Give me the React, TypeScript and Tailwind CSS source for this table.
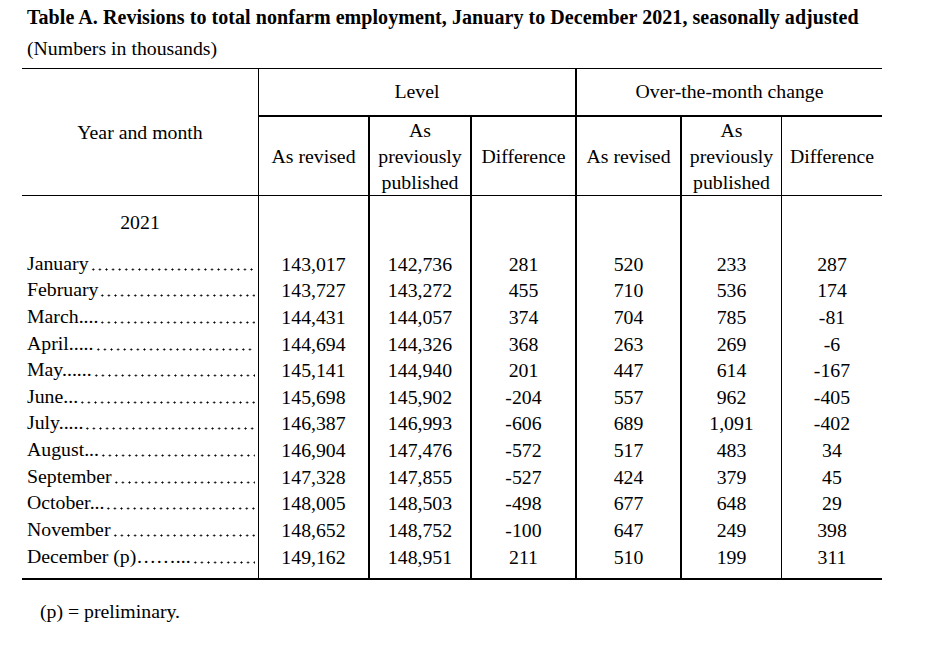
import React from "react";

const cols = "grid grid-cols-[236px_110px_102px_105px_105px_101px_101px]";

type Row = { m: string; pre: string; v: string[] };

const rows: Row[] = [
  { m: "January", pre: "", v: ["143,017", "142,736", "281", "520", "233", "287"] },
  { m: "February", pre: "", v: ["143,727", "143,272", "455", "710", "536", "174"] },
  { m: "March", pre: "....", v: ["144,431", "144,057", "374", "704", "785", "-81"] },
  { m: "April", pre: ".....", v: ["144,694", "144,326", "368", "263", "269", "-6"] },
  { m: "May", pre: "......", v: ["145,141", "144,940", "201", "447", "614", "-167"] },
  { m: "June", pre: "...", v: ["145,698", "145,902", "-204", "557", "962", "-405"] },
  { m: "July", pre: ".....", v: ["146,387", "146,993", "-606", "689", "1,091", "-402"] },
  { m: "August", pre: "...", v: ["146,904", "147,476", "-572", "517", "483", "34"] },
  { m: "September", pre: "", v: ["147,328", "147,855", "-527", "424", "379", "45"] },
  { m: "October", pre: "...", v: ["148,005", "148,503", "-498", "677", "648", "29"] },
  { m: "November", pre: "", v: ["148,652", "148,752", "-100", "647", "249", "398"] },
  { m: "December (p)", pre: "……...", v: ["149,162", "148,951", "211", "510", "199", "311"] },
];

const borders = [
  "border-l border-black",
  "border-l-2 border-black",
  "border-l-2 border-black",
  "border-l-2 border-black",
  "border-l-2 border-black",
  "border-l border-black",
];

function BodyRow({ h, first, values }: { h: string; first?: React.ReactNode; values?: string[] }) {
  return (
    <div className={`${cols} ${h}`}>
      <div className="flex items-stretch min-w-0">{first}</div>
      {borders.map((b, i) => (
        <div key={i} className={`${b} flex items-center justify-center`}>
          {values ? values[i] : null}
        </div>
      ))}
    </div>
  );
}

export default function App() {
  return (
    <div
      className="w-[936px] h-[648px] bg-white text-black text-[19.8px]"
      style={{ fontFamily: '"Liberation Serif", "Times New Roman", serif' }}
    >
      <div className="pt-[4px] pl-[27px] font-bold text-[20px] tracking-[0.06px] leading-[26px] whitespace-nowrap">
        Table A. Revisions to total nonfarm employment, January to December 2021, seasonally adjusted
      </div>
      <div className="mt-[5px] pl-[27px] leading-[26px]">(Numbers in thousands)</div>

      <div className="ml-[22px] mt-[7px] w-[860px]">
        {/* header */}
        <div className="flex border-t border-b border-black">
          <div className="w-[236px] h-[126px] flex items-center justify-center leading-[26px]">
            Year and month
          </div>
          <div className="w-[317px] border-l border-black flex flex-col">
            <div className="h-[48px] border-b-2 border-black flex items-center justify-center">Level</div>
            <div className="flex h-[78px] leading-[26px] text-center">
              <div className="w-[109px] flex items-center justify-center">As revised</div>
              <div className="w-[102px] border-l-2 border-black flex items-center justify-center">
                As
                <br />
                previously
                <br />
                published
              </div>
              <div className="w-[105px] border-l-2 border-black flex items-center justify-center">Difference</div>
            </div>
          </div>
          <div className="w-[307px] border-l-2 border-black flex flex-col">
            <div className="h-[48px] border-b-2 border-black flex items-center justify-center">
              Over-the-month change
            </div>
            <div className="flex h-[78px] leading-[26px] text-center">
              <div className="w-[103px] flex items-center justify-center">As revised</div>
              <div className="w-[101px] border-l-2 border-black flex items-center justify-center">
                As
                <br />
                previously
                <br />
                published
              </div>
              <div className="w-[101px] border-l border-black flex items-center justify-center">Difference</div>
            </div>
          </div>
        </div>

        {/* body */}
        <div className="border-b-2 border-black">
          <BodyRow
            h="h-[53.7px]"
            first={<div className="w-full flex items-center justify-center">2021</div>}
          />
          {rows.map((r) => (
            <BodyRow
              key={r.m}
              h="h-[26.64px]"
              values={r.v}
              first={
                <div className="flex w-full h-full pl-[5px] pr-[3px] leading-[26.64px] whitespace-nowrap">
                  <span>
                    {r.m}
                    {r.pre}
                  </span>
                  <span className="flex-1 h-full ml-[1px] bg-[radial-gradient(circle,#000_0.75px,transparent_1.35px)] bg-[length:6.6px_13px] bg-repeat-x bg-[position:0_13px]" />
                </div>
              }
            />
          ))}
          <BodyRow h="h-[8.6px]" />
        </div>
      </div>

      <div className="mt-[18px] pl-[40px] leading-[26px]">(p) = preliminary.</div>
    </div>
  );
}
